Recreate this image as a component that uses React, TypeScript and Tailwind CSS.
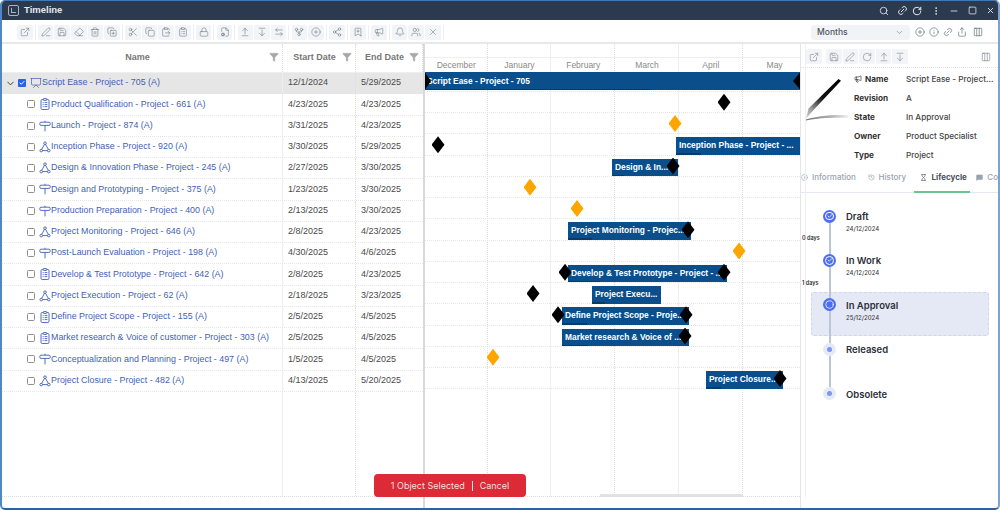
import { ChevronDown, Check, Search, Link2, RotateCw, EllipsisVertical, Minus, Square, X, Filter, ExternalLink, PenLine, Save, Eraser, Trash2, CopyPlus, Scissors, Copy, ClipboardList, ClipboardPaste, Lock, FileCog, ArrowUpFromLine, ArrowDownFromLine, ArrowLeftRight, GitFork, CirclePlus, Share2, BookmarkPlus, Megaphone, Bell, Users, Info, History, Hourglass, MessageSquare, Columns3, Share, Presentation, Circle } from 'lucide-react';
import type { ComponentType } from 'react';

const font = "font-['Liberation_Sans',Arial,sans-serif]";
const ui = "font-['Inter','Liberation_Sans',sans-serif]";

type Kind = 'board' | 'clip' | 'sign' | 'tri';

interface Row {
  name: string;
  start: string;
  end: string;
  kind: Kind;
}

const rows: Row[] = [
  { name: 'Script Ease - Project - 705 (A)', start: '12/1/2024', end: '5/29/2025', kind: 'board' },
  { name: 'Product Qualification - Project - 661 (A)', start: '4/23/2025', end: '4/23/2025', kind: 'clip' },
  { name: 'Launch - Project - 874 (A)', start: '3/31/2025', end: '4/23/2025', kind: 'sign' },
  { name: 'Inception Phase - Project - 920 (A)', start: '3/30/2025', end: '5/29/2025', kind: 'tri' },
  { name: 'Design & Innovation Phase - Project - 245 (A)', start: '2/27/2025', end: '3/30/2025', kind: 'tri' },
  { name: 'Design and Prototyping - Project - 375 (A)', start: '1/23/2025', end: '3/30/2025', kind: 'sign' },
  { name: 'Production Preparation - Project - 400 (A)', start: '2/13/2025', end: '3/30/2025', kind: 'sign' },
  { name: 'Project Monitoring - Project - 646 (A)', start: '2/8/2025', end: '4/23/2025', kind: 'tri' },
  { name: 'Post-Launch Evaluation - Project - 198 (A)', start: '4/30/2025', end: '4/6/2025', kind: 'sign' },
  { name: 'Develop & Test Prototype - Project - 642 (A)', start: '2/8/2025', end: '4/23/2025', kind: 'clip' },
  { name: 'Project Execution - Project - 62 (A)', start: '2/18/2025', end: '3/23/2025', kind: 'tri' },
  { name: 'Define Project Scope - Project - 155 (A)', start: '2/5/2025', end: '4/5/2025', kind: 'clip' },
  { name: 'Market research & Voice of customer - Project - 303 (A)', start: '2/5/2025', end: '4/5/2025', kind: 'clip' },
  { name: 'Conceptualization and Planning - Project - 497 (A)', start: '1/5/2025', end: '4/5/2025', kind: 'sign' },
  { name: 'Project Closure - Project - 482 (A)', start: '4/13/2025', end: '5/20/2025', kind: 'tri' },
];

interface Lane {
  bar?: { label: string; left: number; width: number; progress: number };
  marks: { x: number; color: 'black' | 'orange' }[];
}

// x values are measured from the splitter line at x=424
const lanes: Lane[] = [
  { bar: { label: 'Script Ease - Project - 705', left: 1, width: 375, progress: 225 }, marks: [] },
  { marks: [{ x: 300, color: 'black' }] },
  { marks: [{ x: 251, color: 'orange' }] },
  { bar: { label: 'Inception Phase - Project - ...', left: 252, width: 124, progress: 25 }, marks: [{ x: 14, color: 'black' }] },
  { bar: { label: 'Design & In...', left: 188, width: 66, progress: 12 }, marks: [{ x: 249, color: 'black' }] },
  { marks: [{ x: 106, color: 'orange' }] },
  { marks: [{ x: 153, color: 'orange' }] },
  { bar: { label: 'Project Monitoring - Projec...', left: 144, width: 123, progress: 24 }, marks: [{ x: 264, color: 'black' }] },
  { marks: [{ x: 315, color: 'orange' }] },
  { bar: { label: 'Develop & Test Prototype - Project - ...', left: 144, width: 159, progress: 32 }, marks: [{ x: 141, color: 'black' }, { x: 300, color: 'black' }] },
  { bar: { label: 'Project Execu...', left: 168, width: 69, progress: 13 }, marks: [{ x: 109, color: 'black' }] },
  { bar: { label: 'Define Project Scope - Proje...', left: 138, width: 127, progress: 25 }, marks: [{ x: 134, color: 'black' }, { x: 262, color: 'black' }] },
  { bar: { label: 'Market research & Voice of ...', left: 138, width: 127, progress: 25 }, marks: [{ x: 261, color: 'black' }] },
  { marks: [{ x: 69, color: 'orange' }] },
  { bar: { label: 'Project Closure...', left: 282, width: 77, progress: 15 }, marks: [{ x: 356, color: 'black' }] },
];

const months = ['December', 'January', 'February', 'March', 'April', 'May'];

const toolGroups: ComponentType<{ className?: string; strokeWidth?: number }>[][] = [
  [ExternalLink],
  [PenLine, Save, Eraser, Trash2, CopyPlus],
  [Scissors, Copy, ClipboardPaste, ClipboardList],
  [Lock],
  [FileCog],
  [ArrowUpFromLine, ArrowDownFromLine, ArrowLeftRight],
  [GitFork, CirclePlus],
  [Share2],
  [BookmarkPlus],
  [Megaphone],
  [Bell, Users, X],
];

function KindIcon({ kind }: { kind: Kind }) {
  if (kind === 'board') return <Presentation className="w-[12px] h-[12px] shrink-0 text-[#3f5fb5]" strokeWidth={1.4} />;
  return (
    <svg viewBox="0 0 12 12" className="w-[12px] h-[12px] shrink-0 text-[#3f5fb5]" fill="none" stroke="currentColor" strokeWidth="0.9">
      {kind === 'clip' && (
        <>
          <rect x="2" y="1.5" width="8" height="10" rx="1.2" />
          <rect x="4.2" y="0.6" width="3.6" height="1.8" rx="0.5" fill="white" />
          <path d="M3.6 4.6h1M5.6 4.6h2.8M3.6 6.6h1M5.6 6.6h2.8M3.6 8.6h1M5.6 8.6h2.8" />
        </>
      )}
      {kind === 'sign' && (
        <>
          <rect x="0.8" y="2.2" width="10.4" height="3.2" rx="1.2" />
          <path d="M6 0.8v1.4M6 5.4v6" />
        </>
      )}
      {kind === 'tri' && (
        <>
          <path d="M6 2.4 L10 9.6 H2 Z" />
          <circle cx="6" cy="2.2" r="1.3" fill="white" />
          <circle cx="2.2" cy="9.6" r="1.3" fill="white" />
          <circle cx="9.8" cy="9.6" r="1.3" fill="white" />
        </>
      )}
    </svg>
  );
}

function HeaderCell({ label, className }: { label: string; className: string }) {
  return (
    <div className={`relative flex items-center justify-center h-full text-[9px] font-bold text-[#777777] border-r border-dotted border-[#dddddd] ${className}`}>
      {label}
      <Filter className="absolute right-[3px] top-[8px] w-[10px] h-[10px] text-[#a8a8a8] fill-[#a8a8a8]" strokeWidth={1} />
    </div>
  );
}

function Diamond({ x, color }: { x: number; color: string }) {
  return (
    <div
      className={`absolute top-[2px] w-[13px] h-[17px] z-10 [clip-path:polygon(50%_0,100%_50%,50%_100%,0_50%)] ${color === 'orange' ? 'bg-[#ffa500]' : 'bg-black'}`}
      style={{ left: x - 6.5 }}
    />
  );
}

function PenDrawing() {
  return (
    <svg viewBox="0 0 44 46" className="mt-[7.5px] w-[44px] h-[46px] shrink-0">
      <defs>
        <linearGradient id="penBody" x1="0" y1="1" x2="1" y2="0">
          <stop offset="0" stopColor="#d0d0d0" />
          <stop offset="0.2" stopColor="#9a9a9a" />
          <stop offset="0.5" stopColor="#111111" />
          <stop offset="1" stopColor="#000000" />
        </linearGradient>
        <linearGradient id="penShadow" x1="0" y1="0" x2="1" y2="0">
          <stop offset="0" stopColor="#6f6f6f" />
          <stop offset="0.6" stopColor="#b5b5b5" />
          <stop offset="1" stopColor="#eeeeee" />
        </linearGradient>
      </defs>
      <path d="M33.5 1 L36 2.8 L9 31.5 L1 40.5 L3.5 30.5 Z" fill="url(#penBody)" />
      <path d="M1 41.5 C12 38 30 36 43 37.5 L43 40 C30 39.5 13 40 1 42.5 Z" fill="url(#penShadow)" />
    </svg>
  );
}

function Stage({ title, date, state, gap }: { title: string; date?: string; state: 'done' | 'current' | 'todo'; gap?: string }) {
  return (
    <div className="relative h-[44.4px]">
      {gap && <span className="absolute left-[1px] top-[-26px] z-20 text-[5.5px] leading-[8px] font-semibold text-[#333333]">{gap}</span>}
      {state === 'current' && (
        <div className="absolute left-[9.5px] top-[-13px] w-[178.5px] h-[44.5px] rounded-[3px] border border-dashed border-[#cfd6e6] bg-[#e4e9f5]" />
      )}
      <div className={`absolute left-[22px] top-[-6.5px] z-10 flex items-center justify-center w-[13px] h-[13px] rounded-full ${state === 'todo' ? 'bg-[#e6eaf5]' : 'bg-[#4c6ef5]'}`}>
        {state === 'done' && (
          <span className="flex items-center justify-center w-[8.5px] h-[8.5px] rounded-full border border-white">
            <Check className="w-[6px] h-[6px] text-white" strokeWidth={3} />
          </span>
        )}
        {state === 'current' && <Circle className="w-[9px] h-[9px] text-white" strokeWidth={2} />}
        {state === 'todo' && <span className="w-[5px] h-[5px] rounded-full bg-[#7b96f7]" />}
      </div>
      <div className="absolute left-[45px] top-[-5px] z-10 whitespace-nowrap">
        <div className="text-[9.5px] leading-[12px] font-semibold text-[#2b2f38]">{title}</div>
        {date && <div className="text-[6px] leading-[10px] mt-[1px] font-medium text-[#444444]">{date}</div>}
      </div>
    </div>
  );
}

export default function App() {
  return (
    <div className={`relative w-[1000px] h-[510px] overflow-hidden bg-white ${ui}`}>
      <div className="flex flex-col h-full rounded-[5px] overflow-hidden border-l-2 border-r-2 border-b-2 border-t border-t-[#3f79b8] border-l-[#4f86c6] border-r-[#7aa3d4] border-b-[#2a63a8]">
        {/* title bar */}
        <div className="flex items-center h-[19px] shrink-0 bg-[#2c3a4f] text-[#e6e9ee] pl-[6px] pr-[3px]">
          <span className="flex items-center justify-center w-[11px] h-[11px] rounded-[2px] border border-[#aab2be]">
            <span className="block w-[5px] h-[5px] border-l border-b border-[#aab2be]" />
          </span>
          <span className={`ml-[5px] text-[9.5px] font-bold ${font}`}>Timeline</span>
          <div className="ml-auto flex items-center">
            <Search className="w-[10px] h-[10px]" />
            <Link2 className="ml-[8px] w-[11px] h-[11px] -rotate-45" />
            <RotateCw className="ml-[4.5px] w-[10px] h-[10px]" strokeWidth={2.4} />
            <EllipsisVertical className="ml-[9px] w-[10px] h-[10px]" />
            <Minus className="ml-[8px] w-[10px] h-[10px]" />
            <Square className="ml-[9px] w-[9px] h-[9px]" />
            <X className="ml-[9px] w-[9px] h-[9px]" strokeWidth={2.4} />
          </div>
        </div>

        {/* main toolbar */}
        <div className="flex items-center h-[24px] shrink-0 pl-[15px] pr-[15px] pt-[2px] border-b-2 border-[#e8e8e8]">
          <div className="flex items-center gap-[2.3px]">
            {toolGroups.map((group, i) => (
              <div key={i} className="flex items-center gap-[1px] pr-[2px] border-r border-[#eeeeee]">
                {group.map((Icon, j) => (
                  <span key={j} className="flex items-center justify-center w-[15.6px] h-[15px] rounded-[2px] bg-[#f3f4f7] text-[#666f7c]">
                    <Icon className="w-[10px] h-[10px]" strokeWidth={1.3} />
                  </span>
                ))}
              </div>
            ))}
          </div>
          <div className="ml-auto flex items-center gap-[4px] text-[#4d5663]">
            <div className="flex items-center justify-between w-[99px] h-[15px] mr-[1px] px-[6px] rounded-[3px] bg-[#f1f3f7] text-[8.5px] font-medium">
              Months
              <ChevronDown className="w-[9px] h-[9px] text-[#8a92a0]" />
            </div>
            <CirclePlus className="w-[10px] h-[10px]" strokeWidth={1.4} />
            <Info className="w-[10px] h-[10px]" strokeWidth={1.4} />
            <Link2 className="w-[10px] h-[10px] -rotate-45" strokeWidth={1.4} />
            <Share className="w-[10px] h-[10px]" strokeWidth={1.4} />
            <Columns3 className="ml-[2px] w-[10px] h-[10px]" strokeWidth={1.4} />
          </div>
        </div>

        <div className="flex flex-1 min-h-0">
          {/* tree table */}
          <div className={`flex flex-col w-[421px] shrink-0 ${font}`}>
            <div className="flex h-[29px] shrink-0 border-b border-[#eeeeee]">
              <HeaderCell label="Name" className="w-[281px] pr-[9px]" />
              <HeaderCell label="Start Date" className="w-[73px] pr-[9px]" />
              <HeaderCell label="End Date" className="flex-1 pr-[9px]" />
            </div>
            {rows.map((row, i) => (
              <div key={row.name} className={`flex h-[21.25px] shrink-0 items-center border-b border-dotted border-[#e6e6e6] ${i === 0 ? 'bg-[#e6e6e6]' : ''}`}>
                <div className="flex items-center h-full w-[281px] text-[8.9px] text-[#3f5fb5] border-r border-[#eeeeee]">
                  {i === 0 ? (
                    <>
                      <ChevronDown className="ml-[3px] w-[11px] h-[11px] text-[#333333]" strokeWidth={2} />
                      <span className="ml-[2px] flex items-center justify-center w-[8px] h-[8px] rounded-[1px] bg-[#2563eb]">
                        <Check className="w-[6px] h-[6px] text-white" strokeWidth={4} />
                      </span>
                      <span className="ml-[4px]"><KindIcon kind={row.kind} /></span>
                    </>
                  ) : (
                    <>
                      <span className="ml-[25px] w-[8px] h-[8px] rounded-[1.5px] border border-[#8f8f8f] bg-white" />
                      <span className="ml-[4px]"><KindIcon kind={row.kind} /></span>
                    </>
                  )}
                  <span className="whitespace-nowrap">{row.name}</span>
                </div>
                <div className="flex items-center h-full w-[73px] pl-[5px] text-[9px] text-[#4a4a4a] border-r border-dotted border-[#dddddd]">{row.start}</div>
                <div className="flex items-center h-full flex-1 pl-[5px] text-[9px] text-[#4a4a4a]">{row.end}</div>
              </div>
            ))}
            <div className="flex flex-1 border-b border-dotted border-[#dddddd] mb-[11px]">
              <div className="w-[281px] border-r border-[#eeeeee]" />
              <div className="w-[73px] border-r border-dotted border-[#dddddd]" />
            </div>
          </div>

          {/* gantt */}
          <div className={`relative flex flex-col w-[377px] shrink-0 border-l-2 border-[#d9d9d9] ${font}`}>
            <div className="absolute inset-0 bottom-[11px] flex pointer-events-none">
              {months.map((m, i) => (
                <div key={m} className={`h-full shrink-0 border-r ${i === 0 ? 'w-[62.5px]' : 'w-[63.8px]'} ${i % 2 === 0 ? 'border-dotted border-[#dcdcdc]' : 'border-[#efefef]'}`} />
              ))}
            </div>
            <div className="h-[14px] shrink-0 border-b border-[#eeeeee]" />
            <div className="relative flex h-[12.5px] shrink-0 pt-[2px] text-[8.5px] text-[#8a8a8a]">
              {months.map((m, i) => (
                <div key={m} className={`flex items-center justify-center shrink-0 ${i === 0 ? 'w-[62.5px]' : 'w-[63.8px]'}`}>{m}</div>
              ))}
            </div>
            {lanes.map((lane, i) => (
              <div key={i} className="relative h-[21.25px] shrink-0 border-b border-dotted border-[#e6e6e6]">
                {lane.bar && (
                  <div
                    className={`absolute overflow-hidden bg-[#0a4f8c] text-white text-[8.4px] font-bold whitespace-nowrap ${i === 0 ? 'top-[1px] h-[18.5px] leading-[19px] pl-[2px]' : 'top-[3px] h-[17.5px] leading-[17.5px] pl-[3px]'}`}
                    style={{ left: lane.bar.left - 1, width: lane.bar.width }}
                  >
                    {lane.bar.label}
                    <div className="absolute left-0 bottom-0 h-[1.5px] bg-[#0b3a66]" style={{ width: lane.bar.progress }} />
                  </div>
                )}
                {lane.marks.map((m, j) => (
                  <Diamond key={j} x={m.x - 1} color={m.color} />
                ))}
                {i === 0 && (
                  <>
                    <div className="absolute left-0 top-[2px] h-[17px] w-[6px] bg-black [clip-path:polygon(0_0,100%_50%,0_100%)]" />
                    <div className="absolute right-0 top-[2px] h-[17px] w-[7px] bg-black [clip-path:polygon(100%_0,0_50%,100%_100%)]" />
                  </>
                )}
              </div>
            ))}
            <div className="absolute left-[175px] right-[57px] bottom-[11px] h-[3px] bg-[#e2e2e4]" />
            <div className="absolute left-0 right-0 bottom-[11px] border-b border-dotted border-[#dddddd]" />
          </div>

          {/* details panel */}
          <div className="flex flex-col flex-1 min-w-0 overflow-hidden border-l border-[#e2e5ec]">
            <div className="flex items-center h-[23px] shrink-0 pl-[5px] pr-[5px] pt-[2px] text-[#6f7885]">
              <span className="flex items-center justify-center w-[16px] h-[15px] rounded-[2px] bg-[#f3f4f7]"><ExternalLink className="w-[10px] h-[10px]" strokeWidth={1.3} /></span>
              <div className="flex ml-[4px] gap-[1px]">
                {[Save, PenLine, RotateCw, ArrowUpFromLine, ArrowDownFromLine].map((Icon, i) => (
                  <span key={i} className="flex items-center justify-center w-[15.6px] h-[15px] rounded-[2px] bg-[#f3f4f7]"><Icon className="w-[10px] h-[10px]" strokeWidth={1.3} /></span>
                ))}
              </div>
              <Columns3 className="ml-auto mr-[2px] w-[10px] h-[10px]" strokeWidth={1.4} />
            </div>
            <div className="flex h-[100px] shrink-0 pl-[4px] pt-[2px] border-t border-dotted border-[#e2e2e2]">
              <PenDrawing />
              <div className="ml-[5px] grid grid-cols-[52px_1fr] auto-rows-[19px] items-center text-[8.2px] text-[#444444] font-medium">
                <span className="flex items-center gap-[3px] font-bold text-[#333333]"><Megaphone className="w-[8px] h-[8px]" />Name</span><span className="whitespace-nowrap">Script Ease - Project...</span>
                <span className="font-bold text-[#333333]">Revision</span><span>A</span>
                <span className="font-bold text-[#333333]">State</span><span>In Approval</span>
                <span className="font-bold text-[#333333]">Owner</span><span>Product Specialist</span>
                <span className="font-bold text-[#333333]">Type</span><span>Project</span>
              </div>
            </div>
            <div className="flex items-center h-[26px] shrink-0 pb-[5px] border-b border-[#e6e8f0] text-[8px] font-medium text-[#9aa3b0]">
              <span className="flex items-center gap-[4px] w-[61px]"><Info className="w-[7px] h-[7px]" />Information</span>
              <span className="flex items-center gap-[4px] w-[55px] pl-[7px]"><History className="w-[7px] h-[7px]" />History</span>
              <span className="relative flex items-center gap-[4px] w-[57px] h-full pl-[6px] font-bold text-[#4a525e]">
                <Hourglass className="w-[7px] h-[7px]" />Lifecycle
                <span className="absolute left-0 right-0 bottom-[-6px] h-[2px] bg-[#6cc48f]" />
              </span>
              <span className="flex items-center gap-[4px] pl-[6px]"><MessageSquare className="w-[7px] h-[7px] fill-current" />Co</span>
            </div>
            <div className="relative pt-[23px]">
              <div className="absolute left-[28px] top-[23px] h-[177px] w-[1.5px] bg-[#bcc5d8] z-[1]" />
              <Stage title="Draft" date="24/12/2024" state="done" />
              <Stage title="In Work" date="24/12/2024" state="done" gap="0 days" />
              <Stage title="In Approval" date="25/12/2024" state="current" gap="1 days" />
              <Stage title="Released" state="todo" />
              <Stage title="Obsolete" state="todo" />
            </div>
          </div>
        </div>
      </div>

      {/* selection pill */}
      <div className="absolute left-[374px] top-[474px] z-20 flex items-center justify-center gap-[7px] w-[152px] h-[23px] rounded-[4px] bg-[#dc2a37] text-[9px] text-[#fbdfe1]">
        <span>1 Object Selected</span>
        <span className="w-px h-[10px] bg-[#fbdfe1]" />
        <span>Cancel</span>
      </div>
    </div>
  );
}
